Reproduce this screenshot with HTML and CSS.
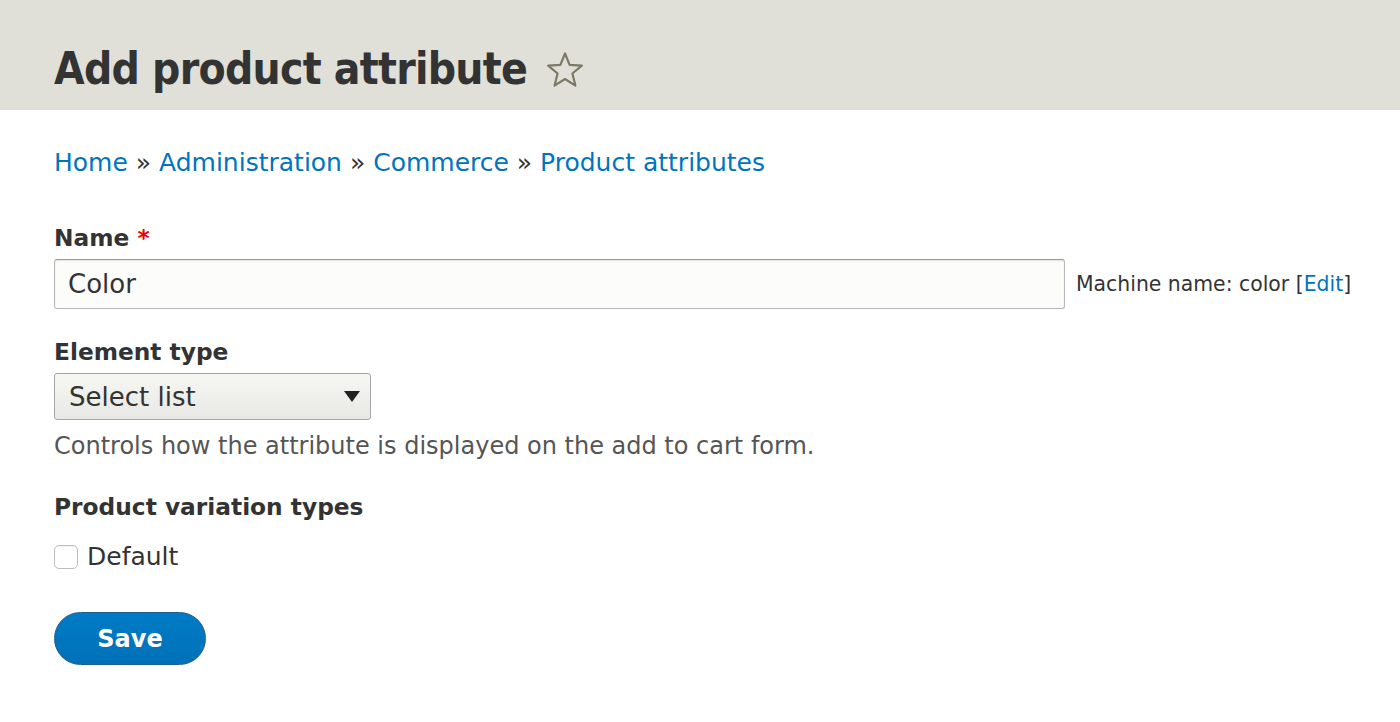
FILE: index.html
```html
<!DOCTYPE html>
<html lang="en">
<head>
<meta charset="utf-8">
<title>Add product attribute</title>
<link rel="stylesheet" href="styles.css">
</head>
<body>
<header class="page-header">
  <h1 class="page-title">Add product attribute</h1>
  <svg class="star" width="38" height="38" viewBox="0 0 38 38" aria-hidden="true">
    <path d="M19 2.5 L23.6 13.9 L35.8 14.7 L26.4 22.5 L29.4 34.6 L19 28 L8.6 34.6 L11.6 22.5 L2.2 14.7 L14.4 13.9 Z" fill="none" stroke="#7b7a66" stroke-width="2.2" stroke-linejoin="round"/>
  </svg>
</header>
<main class="content">
  <nav class="breadcrumb">
    <a href="#">Home</a> <span class="sep">»</span> <a href="#">Administration</a> <span class="sep">»</span> <a href="#">Commerce</a> <span class="sep">»</span> <a href="#">Product attributes</a>
  </nav>
  <form class="form">
    <div class="field">
      <label class="label">Name <span class="req">*</span></label>
      <div class="name-row">
        <input class="text-input" type="text" value="Color">
        <span class="machine">Machine name: color [<a href="#">Edit</a>]</span>
      </div>
    </div>
    <div class="field">
      <label class="label">Element type</label>
      <div class="select">
        <span>Select list</span>
        <span class="arrow"></span>
      </div>
      <div class="desc">Controls how the attribute is displayed on the add to cart form.</div>
    </div>
    <div class="field field-types">
      <div class="label">Product variation types</div>
      <label class="check"><span class="box"></span>Default</label>
    </div>
    <button type="button" class="save">Save</button>
  </form>
</main>
</body>
</html>
```

FILE: styles.css
```css
html, body {
  margin: 0;
  padding: 0;
  background: #fff;
  font-family: "DejaVu Sans", "Noto Sans", sans-serif;
  color: #333;
}
.page-header {
  background: #e0e0d8;
  height: 110px;
  box-sizing: border-box;
  padding: 0 0 0 54px;
  display: flex;
  align-items: center;
}
.page-title {
  margin: 0;
  font-family: "DejaVu Sans Condensed", "DejaVu Sans", sans-serif;
  font-size: 44px;
  font-weight: bold;
  letter-spacing: -0.75px;
  color: #333;
  line-height: 1;
  padding-top: 28px;
}
.star {
  margin-left: 19px;
  margin-top: 30px;
}
.content {
  padding: 0 54px;
}
.breadcrumb {
  margin-top: 38px;
  font-size: 25px;
  line-height: 30px;
  color: #333;
}
.breadcrumb a {
  color: #0074bd;
  text-decoration: none;
}
.form {
  margin-top: 45px;
}
.field {
  margin-bottom: 28px;
}
.label {
  display: block;
  font-weight: bold;
  font-size: 23.3px;
  line-height: 30px;
  color: #333;
  margin-bottom: 6px;
}
.req {
  color: #e00;
}
.name-row {
  display: flex;
  align-items: center;
}
.text-input {
  flex: 0 0 auto;
  width: 1011px;
  height: 50px;
  box-sizing: border-box;
  border: 1px solid #b8b8b8;
  border-top-color: #999;
  border-radius: 3px;
  background: #fcfcfa;
  font-family: inherit;
  font-size: 26px;
  color: #333;
  padding: 0 13px;
  box-shadow: inset 0 1px 2px rgba(0,0,0,0.1);
}
.machine {
  margin-left: 11px;
  font-size: 20.4px;
  white-space: nowrap;
  color: #333;
}
.machine a {
  color: #0074bd;
  text-decoration: none;
}
.select {
  width: 317px;
  height: 47px;
  box-sizing: border-box;
  border: 1px solid #a6a6a6;
  border-radius: 3px;
  background: linear-gradient(#f6f6f3, #e8e8e4);
  display: flex;
  align-items: center;
  justify-content: space-between;
  padding: 0 10px 0 14px;
  font-size: 26px;
  color: #333;
}
.arrow {
  width: 0;
  height: 0;
  border-left: 8.5px solid transparent;
  border-right: 8.5px solid transparent;
  border-top: 11px solid #222;
}
.desc {
  margin-top: 12px;
  font-size: 24px;
  color: #555;
}
.field-types {
  margin-top: 32px;
}
.check {
  display: flex;
  align-items: center;
  font-size: 25px;
  color: #333;
  margin-top: 20px;
}
.box {
  width: 22px;
  height: 22px;
  border: 1px solid #bdbdbd;
  border-radius: 5px;
  background: #fff;
  margin-right: 9px;
  box-shadow: inset 0 1px 1px rgba(0,0,0,0.06);
}
.save {
  width: 152px;
  height: 53px;
  border-radius: 27px;
  border: 1px solid #1e5c90;
  background: linear-gradient(#007bc6, #0071b8);
  color: #fff;
  font-family: inherit;
  font-size: 24px;
  font-weight: bold;
  cursor: pointer;
  margin-top: 13px;
}
```
